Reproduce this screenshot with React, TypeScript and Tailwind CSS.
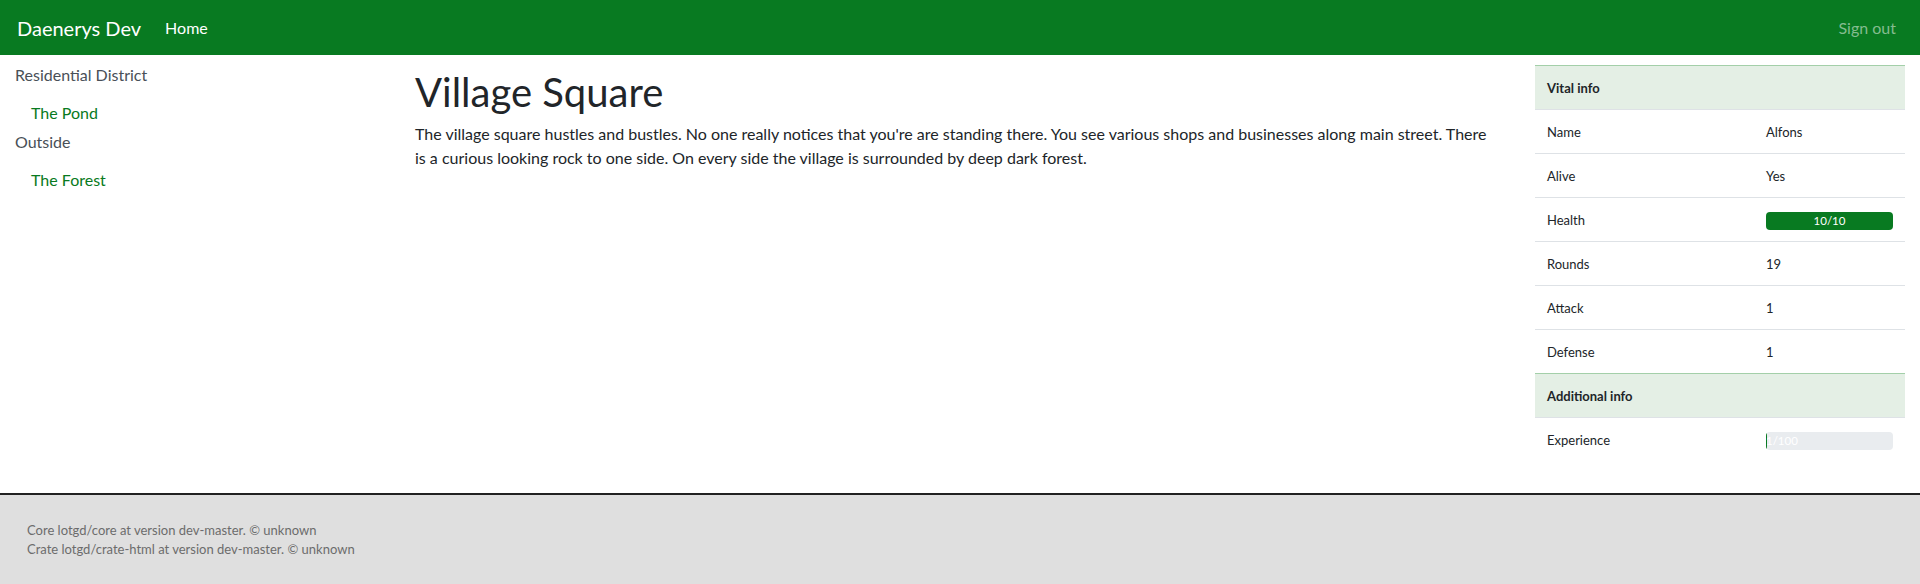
const font = { fontFamily: 'Lato, "Open Sans", sans-serif' };

type Stat = { label: string; value: string; bar?: { now: number; max: number } };

const vital: Stat[] = [
  { label: 'Name', value: 'Alfons' },
  { label: 'Alive', value: 'Yes' },
  { label: 'Health', value: '10/10', bar: { now: 10, max: 10 } },
  { label: 'Rounds', value: '19' },
  { label: 'Attack', value: '1' },
  { label: 'Defense', value: '1' },
];

const additional: Stat[] = [{ label: 'Experience', value: '1/100', bar: { now: 1, max: 100 } }];

function Progress({ now, max, text }: { now: number; max: number; text: string }) {
  return (
    <div className="flex h-[18px] w-[127px] overflow-hidden rounded-[4px] bg-[#e9ecef] text-[11.5px] leading-[18px] text-white">
      <div className="bg-[#087a21] text-center whitespace-nowrap" style={{ width: `${(now / max) * 100}%` }}>
        {text}
      </div>
    </div>
  );
}

function StatRow({ stat }: { stat: Stat }) {
  return (
    <div className="grid h-[44px] grid-cols-[219px_1fr] items-center border-t border-[#dee2e6] px-[12px] pt-[3px] text-[13px] text-[#212529]">
      <div>{stat.label}</div>
      <div>{stat.bar ? <Progress now={stat.bar.now} max={stat.bar.max} text={stat.value} /> : stat.value}</div>
    </div>
  );
}

function Section({ title, stats }: { title: string; stats: Stat[] }) {
  return (
    <>
      <div className="flex h-[44px] items-center border-t border-[#a3cfa9] bg-[#e4efe5] px-[12px] pt-[2px] text-[13px] font-bold text-[#212529]">
        {title}
      </div>
      {stats.map((s) => (
        <StatRow key={s.label} stat={s} />
      ))}
    </>
  );
}

export default function App() {
  return (
    <div className="flex min-h-[584px] flex-col bg-white" style={font}>
      {/* navbar */}
      <nav className="flex h-[55px] items-center bg-[#087a21] pl-[17px] pr-[24px]">
        <span className="text-[20px] text-white">Daenerys Dev</span>
        <span className="ml-[24px] text-[16px] text-white">Home</span>
        <span className="ml-auto text-[16px] text-[#84bc8f]">Sign out</span>
      </nav>

      <div className="grid grid-cols-[400px_1fr_400px] pb-[32px]">
        {/* location nav */}
        <div className="px-[15px] pt-[8px] text-[16px] leading-[24px]">
          <div className="text-[#495057]">Residential District</div>
          <div className="pl-[16px] pt-[14px] pb-[5px] text-[#087a21]">The Pond</div>
          <div className="text-[#495057]">Outside</div>
          <div className="pl-[16px] pt-[14px] pb-[5px] text-[#087a21]">The Forest</div>
        </div>

        {/* scene */}
        <div className="pl-[15px] pr-[30px] pt-[13px] text-[#212529]">
          <h1 className="mb-[6px] text-[40px] leading-[48px]">Village Square</h1>
          <p className="text-[16px] leading-[24px]">
            The village square hustles and bustles. No one really notices that you're are standing there. You see various shops and businesses along main street. There is a curious looking rock to one side. On every side the village is surrounded by deep dark forest.
          </p>
        </div>

        {/* character */}
        <div className="px-[15px] pt-[10px]">
          <Section title="Vital info" stats={vital} />
          <Section title="Additional info" stats={additional} />
        </div>
      </div>

      <footer className="flex-1 border-t-2 border-[#222] bg-[#dfdfdf] px-[27px] pt-[26px] pb-[40px] text-[13px] leading-[19px] text-[#6c6c6c]">
        <div>Core lotgd/core at version dev-master. © unknown</div>
        <div>Crate lotgd/crate-html at version dev-master. © unknown</div>
      </footer>
    </div>
  );
}
